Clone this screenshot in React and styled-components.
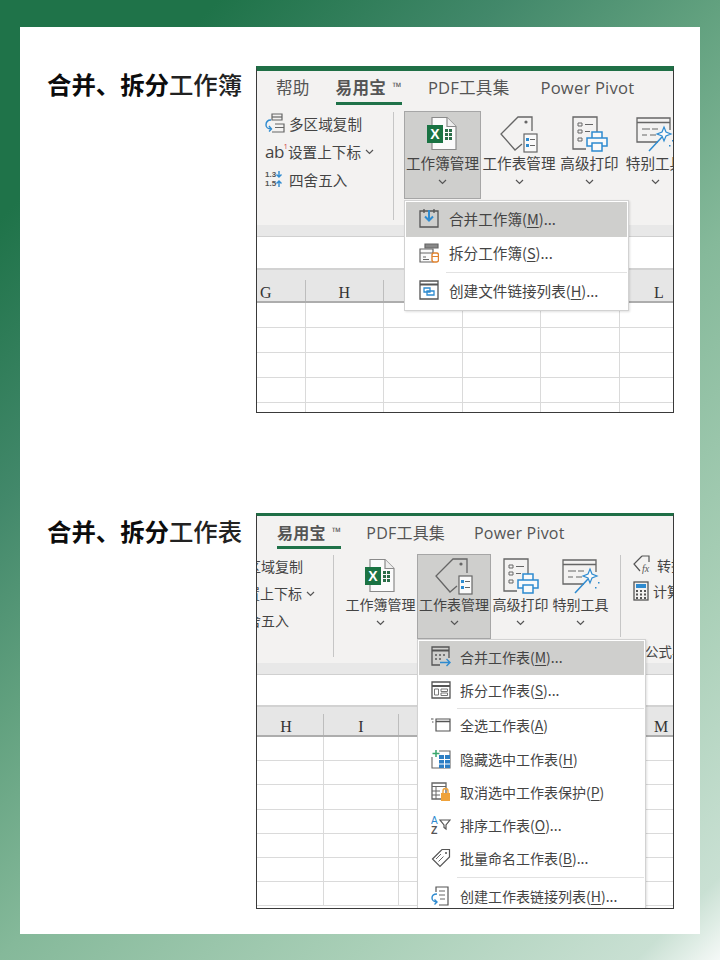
import React from 'react'
import styled, { createGlobalStyle } from 'styled-components'

const GlobalStyle = createGlobalStyle`
  html, body {
    margin: 0;
    padding: 0;
  }
  body {
    font-family: "Noto Sans CJK SC", "Liberation Sans", sans-serif;
  }
`

const Page = styled.div`
  box-sizing: border-box;
  width: 720px;
  height: 960px;
  padding: 27px 20px 26px;
  background: linear-gradient(135deg, #1f7349 0%, #1f7349 13%, #42886a 30%, #62a17f 43%, #85b99a 57%, #a9cfb7 78%, #c9e0d3 95%, #f5f9f7 100%);
`

const Card = styled.div`
  height: 907px;
  padding: 39px 26px 0 26px;
  box-sizing: border-box;
  background: #fff;
`

const Section = styled.section`
  display: flex;
  align-items: flex-start;
  margin-bottom: ${p => p.$gap}px;
`

const Title = styled.h2`
  width: 210px;
  flex: none;
  margin: 0;
  padding-left: 1px;
  box-sizing: border-box;
  font-size: 24.4px;
  line-height: 36px;
  font-weight: 700;
  color: #0c0c0c;
  white-space: nowrap;
  span {
    font-weight: 500;
    color: #222;
  }
`

const Window = styled.div`
  position: relative;
  box-sizing: border-box;
  width: 418px;
  height: ${p => p.$h}px;
  overflow: hidden;
  border: 1px solid #3a3a3a;
  border-top: ${p => p.$stripe}px solid #1f6f46;
  background: #fff;
  color: #444;
  font-size: ${p => p.$fs}px;
`

const Tabs = styled.div`
  display: flex;
  height: ${p => p.$h}px;
  padding-left: ${p => p.$pad}px;
  background: #f3f2f1;
`

const Tab = styled.div`
  box-sizing: border-box;
  margin-right: ${p => p.$mr}px;
  height: 100%;
  padding-top: ${p => p.$pt}px;
  font-size: ${p => p.$fs}px;
  letter-spacing: 0.2px;
  line-height: 24px;
  white-space: nowrap;
  font-family: "Open Sans", "Noto Sans CJK SC", sans-serif;
  color: #555;
  font-weight: ${p => (p.$active ? 700 : 400)};
  border-bottom: ${p => (p.$active ? '3px solid #1f7249' : 'none')};
  sup {
    margin-left: 2px;
    font-size: 12px;
    font-weight: 400;
    vertical-align: 3px;
    line-height: 0;
  }
`

const Ribbon = styled.div`
  display: flex;
  height: ${p => p.$h}px;
  padding-top: ${p => p.$pt}px;
  box-sizing: border-box;
  background: #f3f2f1;
`

const SmallGroup = styled.div`
  flex: none;
  display: flex;
  flex-direction: column;
  box-sizing: border-box;
  width: ${p => p.$w}px;
  margin-left: ${p => p.$ml}px;
  padding-top: ${p => p.$pt}px;
  gap: ${p => p.$gap}px;
`

const SmallButton = styled.div`
  display: flex;
  align-items: center;
  gap: 4px;
  height: 20px;
  white-space: nowrap;
  svg {
    flex: none;
  }
`

const Ab = styled.span`
  width: 19px;
  font-family: "Open Sans", sans-serif;
  font-size: 17px;
  letter-spacing: -0.5px;
  sup {
    color: #c33;
    font-size: 7px;
    line-height: 0;
    vertical-align: 9px;
  }
`

const Divider = styled.div`
  flex: none;
  width: 1px;
  height: ${p => p.$h}px;
  margin: 1px ${p => p.$mr}px 0 ${p => p.$ml || 0}px;
  background: #c6c6c6;
`

const BigButton = styled.div`
  flex: none;
  box-sizing: border-box;
  display: flex;
  flex-direction: column;
  align-items: center;
  width: ${p => p.$w}px;
  height: ${p => p.$h}px;
  padding-top: 3px;
  border: 1px solid ${p => (p.$on ? '#a6a6a6' : 'transparent')};
  background: ${p => (p.$on ? '#cfcfcd' : 'transparent')};
  white-space: nowrap;
`

const BigIcon = styled.div`
  height: ${p => p.$h}px;
  display: flex;
  align-items: center;
  justify-content: center;
`

const BigLabel = styled.div`
  line-height: 20px;
`

const Chevron = styled.svg`
  margin-top: ${p => p.$mt}px;
`

const GroupHint = styled.div`
  position: absolute;
  right: 0;
  top: ${p => p.$top}px;
  width: 28px;
  overflow: hidden;
  white-space: nowrap;
  font-size: 13.5px;
  line-height: 18px;
`

const Strip = styled.div`
  box-sizing: border-box;
  height: 12px;
  background: #e8e8e8;
  border-bottom: 1px solid #d0d0d0;
`

const FormulaBar = styled.div`
  height: ${p => p.$h}px;
  background: #fff;
`

const HeaderRow = styled.div`
  box-sizing: border-box;
  display: flex;
  align-items: flex-end;
  height: ${p => p.$h}px;
  margin-left: ${p => p.$ml}px;
  width: 700px;
  background: #e6e6e6;
  border-top: 2px solid #d2d2d2;
  border-bottom: 2px solid #adadad;
`

const ColHead = styled.div`
  flex: none;
  box-sizing: border-box;
  width: ${p => p.$w}px;
  height: 21px;
  line-height: 26px;
  text-align: center;
  font-family: "Liberation Serif", serif;
  font-size: 16px;
  color: #333;
  border-right: 1px solid #bdbdbd;
`

const GridRow = styled.div`
  box-sizing: border-box;
  display: flex;
  width: 700px;
  height: ${p => p.$h}px;
  margin-left: ${p => p.$ml}px;
  border-bottom: 1px solid #dadada;
`

const Cell = styled.div`
  flex: none;
  box-sizing: border-box;
  width: ${p => p.$w}px;
  border-right: 1px solid #dadada;
`

const Menu = styled.div`
  position: absolute;
  box-sizing: border-box;
  left: ${p => p.$left}px;
  top: ${p => p.$top}px;
  width: ${p => p.$w}px;
  padding: 1px;
  background: #fff;
  border: 1px solid #d2d2d2;
  box-shadow: 1px 1px 2px rgba(0, 0, 0, 0.12);
`

const MenuItem = styled.div`
  box-sizing: border-box;
  display: flex;
  align-items: center;
  height: ${p => p.$h}px;
  padding: 0 0 3px ${p => p.$pad}px;
  background: ${p => (p.$on ? '#cfcfcd' : 'transparent')};
  white-space: nowrap;
  svg {
    flex: none;
  }
  u {
    text-underline-offset: 2px;
  }
`

const MenuLabel = styled.span`
  margin-left: ${p => p.$ml}px;
`

const MenuLine = styled.div`
  height: 1px;
  margin: ${p => p.$y}px 0 ${p => p.$y}px ${p => p.$ml}px;
  background: #e2e2e2;
`

const ChevronDown = ({ mt = 6 }) => (
  <Chevron $mt={mt} width="9" height="6" viewBox="0 0 9 6" fill="none" stroke="#555" strokeWidth="1.2">
    <path d="M1 1l3.5 3.5L8 1" />
  </Chevron>
)

const ExcelIcon = () => (
  <svg width="32" height="36" viewBox="0 0 32 36">
    <path d="M5 1.5h15l9 9v23h-24z" fill="#fbfbfb" stroke="#8a8a8a" strokeWidth="1.2" />
    <path d="M20 1.5v9h9" fill="#eee" stroke="#8a8a8a" strokeWidth="1.2" />
    <rect x="0" y="9" width="16" height="18" fill="#1a7343" />
    <text x="8" y="23" textAnchor="middle" fontSize="14" fontWeight="700" fontFamily="Liberation Sans" fill="#fff">X</text>
    <path d="M18 13h3v3h-3zM22 13h3v3h-3zM18 17h3v3h-3zM22 17h3v3h-3zM18 21h3v3h-3zM22 21h3v3h-3z" fill="#2c6e49" />
  </svg>
)

const TagIcon = () => (
  <svg width="38" height="38" viewBox="0 0 38 38" fill="none">
    <path d="M22 29l-7 6L1 19 18 2h14v14" stroke="#666" strokeWidth="1.3" />
    <circle cx="26" cy="7" r="1.6" fill="#666" />
    <rect x="24" y="19" width="13" height="18" fill="#fafafa" stroke="#666" strokeWidth="1.2" />
    <path d="M26 23h3v3h-3zM26 29h3v3h-3z" fill="#2e8bd0" />
    <path d="M30 24.5h5M30 30.5h5" stroke="#666" strokeWidth="1.2" />
  </svg>
)

const PrintIcon = () => (
  <svg width="36" height="36" viewBox="0 0 36 36" fill="none">
    <path d="M14 33H1V1h24v15" stroke="#666" strokeWidth="1.3" />
    <path d="M6 7h4v3H6zM6 14h4v3H6zM6 22h4v3H6z" stroke="#666" />
    <path d="M13 8.5h8M13 15.5h5" stroke="#666" strokeWidth="1.2" />
    <path d="M20 22v-6h10v6M20 30h-5v-8h20v8h-5M20 27h10v8H20z" stroke="#2e8bd0" strokeWidth="1.5" fill="#fafafa" />
  </svg>
)

const WandIcon = () => (
  <svg width="38" height="36" viewBox="0 0 38 36" fill="none">
    <path d="M22 26H1V2h33v12" stroke="#666" strokeWidth="1.3" />
    <path d="M1 6.500h33" stroke="#666" strokeWidth="1.6" />
    <path d="M6 13h8M6 19h5M16 13h6M14 19h6" stroke="#666" strokeWidth="1.2" />
    <path d="M13 35l13-14" stroke="#2e8bd0" strokeWidth="1.5" />
    <path d="M28 11l2 5 5 2-5 2-2 5-2-5-5-2 5-2z" stroke="#2e8bd0" strokeWidth="1.2" fill="#fafafa" />
    <path d="M36 24h1.500v1.500H36zM33 29h1.500v1.500H33z" fill="#2e8bd0" />
  </svg>
)

const CopyAreaIcon = () => (
  <svg width="20" height="20" viewBox="0 0 20 20" fill="none">
    <path d="M7 1h10v6H7z" stroke="#666" strokeWidth="1.2" />
    <path d="M7 4h10" stroke="#666" strokeWidth="1.200" />
    <path d="M10 11h9v8H7" stroke="#666" strokeWidth="1.2" />
    <path d="M10 14.500h9" stroke="#666" />
    <path d="M6 7C2 7 1 10 1 12s2 4 5 4M4 13l2.500 3L4 18.500" stroke="#2e8bd0" strokeWidth="1.4" />
  </svg>
)

const RoundIcon = () => (
  <svg width="20" height="20" viewBox="0 0 20 20" fill="none">
    <path d="M14 2v6M11.500 5.500L14 8l2.500-2.500" stroke="#2e8bd0" strokeWidth="1.4" />
    <path d="M14 18v-6M11.500 14.500L14 12l2.500 2.500" stroke="#2e8bd0" strokeWidth="1.4" />
    <text x="0" y="8" fontSize="8" fontWeight="700" fontFamily="Liberation Sans" fill="#555">1.3</text>
    <text x="0" y="17" fontSize="8" fontWeight="700" fontFamily="Liberation Sans" fill="#555">1.5</text>
  </svg>
)

const FormulaTagIcon = () => (
  <svg width="20" height="20" viewBox="0 0 20 20" fill="none">
    <path d="M9 1h7v6M9 1L1 9l6 7" stroke="#555" strokeWidth="1.200" />
    <text x="9" y="17" fontSize="10" fontStyle="italic" fontFamily="Liberation Serif" fill="#555">fx</text>
  </svg>
)

const CalcIcon = () => (
  <svg width="16" height="20" viewBox="0 0 16 20" fill="none">
    <rect x="1" y="1" width="14" height="18" stroke="#555" strokeWidth="1.3" />
    <rect x="3" y="3" width="10" height="4" fill="#2e8bd0" />
    <path d="M3 9h2v2H3zM7 9h2v2H7zM11 9h2v2h-2zM3 12.500h2v2H3zM7 12.500h2v2H7zM11 12.500h2v2h-2zM3 16h2v2H3zM7 16h2v2H7zM11 16h2v2h-2z" fill="#555" />
  </svg>
)

const MergeBookIcon = () => (
  <svg width="20" height="20" viewBox="0 0 20 20" fill="none">
    <path d="M1 3h18v16H1z" stroke="#555" strokeWidth="1.300" />
    <path d="M5 1v4M15 1v4" stroke="#555" strokeWidth="1.300" />
    <path d="M10 2v10M6 8.500l4 4 4-4" stroke="#2e8bd0" strokeWidth="2" />
  </svg>
)

const SplitBookIcon = () => (
  <svg width="20" height="20" viewBox="0 0 20 20" fill="none">
    <path d="M6 1h13v4H6z" stroke="#666" strokeWidth="1.200" fill="#888" />
    <path d="M3 6h11v13H1V6h2" stroke="#666" strokeWidth="1.200" fill="#fafafa" />
    <path d="M1 10h13M4 14h3M4 16.500h6" stroke="#666" />
    <rect x="13" y="10" width="6.500" height="9" rx="2" fill="#fff" stroke="#e0822e" strokeWidth="1.400" />
    <path d="M13 13.500h6.500" stroke="#e0822e" />
  </svg>
)

const LinkListIcon = () => (
  <svg width="20" height="20" viewBox="0 0 20 20" fill="none">
    <path d="M1 1h18v18H1z" stroke="#555" strokeWidth="1.300" />
    <path d="M1 4.500h18" stroke="#555" strokeWidth="2" />
    <path d="M5 8h6v4H5zM8 11h7v4H8z" stroke="#2e8bd0" strokeWidth="1.300" />
  </svg>
)

const MergeSheetIcon = () => (
  <svg width="20" height="21" viewBox="0 0 20 21" fill="none">
    <path d="M9 19H1V1h17v11" stroke="#555" strokeWidth="1.300" />
    <path d="M1 4.500h17" stroke="#555" strokeWidth="2" />
    <path d="M4 8h2v2H4zM8 8h2v2H8zM12 8h2v2h-2zM4 12h2v2H4zM8 12h2v2H8z" fill="#777" />
    <path d="M9 16.500h10M15.500 13l3.500 3.500-3.500 3.500" stroke="#2e8bd0" strokeWidth="1.400" />
  </svg>
)

const SplitSheetIcon = () => (
  <svg width="20" height="18" viewBox="0 0 20 18" fill="none">
    <path d="M1 1h18v16H1z" stroke="#555" strokeWidth="1.300" />
    <path d="M1 5h18" stroke="#555" strokeWidth="2" />
    <path d="M3.500 8h4v6h-4zM10 8h6.500v2.500H10zM10 12h6.500v2.500H10z" stroke="#777" />
  </svg>
)

const SelectAllIcon = () => (
  <svg width="20" height="16" viewBox="0 0 20 16" fill="none">
    <path d="M5 2h14v12H5z" stroke="#555" strokeWidth="1.200" />
    <path d="M5 4.500h14" stroke="#555" strokeWidth="1.500" />
    <path d="M0 2h2.500M1 5h1.500" stroke="#555" strokeWidth="1.200" />
  </svg>
)

const HideSheetIcon = () => (
  <svg width="20" height="20" viewBox="0 0 20 20" fill="none">
    <path d="M1 8v11h18V2H8" stroke="#666" strokeWidth="1.100" />
    <rect x="8" y="6" width="11" height="13" fill="#2e7fc4" />
    <path d="M8 10.500h11M8 15h11M13.500 6v13" stroke="#fff" />
    <path d="M5 1v7M1.500 4.500h7" stroke="#3aa76d" strokeWidth="1.500" />
  </svg>
)

const UnprotectIcon = () => (
  <svg width="20" height="20" viewBox="0 0 20 20" fill="none">
    <path d="M1 1h14v16H1z" stroke="#666" strokeWidth="1.300" />
    <path d="M1 4.500h14M5 4.500V17M1 9h8M1 13h8" stroke="#666" />
    <rect x="10" y="11" width="9" height="8" fill="#efa23a" />
    <path d="M12 11V9a2.500 2.500 0 015 0v2" stroke="#efa23a" strokeWidth="1.400" />
  </svg>
)

const SortIcon = () => (
  <svg width="20" height="20" viewBox="0 0 20 20" fill="none">
    <text x="0" y="8.500" fontSize="10" fontFamily="Liberation Sans" fill="#2e8bd0">A</text>
    <text x="0" y="19" fontSize="10.500" fontWeight="700" fontFamily="Liberation Sans" fill="#555">Z</text>
    <path d="M9 5h10l-4 5v4l-2-1.500V10z" stroke="#555" strokeWidth="1.200" />
  </svg>
)

const RenameIcon = () => (
  <svg width="20" height="20" viewBox="0 0 20 20" fill="none">
    <path d="M1.500 11L11 1.500h7.500V9L9 18.500z" stroke="#555" strokeWidth="1.200" />
    <path d="M5 11l5-5M7.500 13.500l5-5" stroke="#666" />
    <circle cx="15" cy="5" r="1" fill="#555" />
  </svg>
)

const LinkSheetIcon = () => (
  <svg width="20" height="20" viewBox="0 0 20 20" fill="none">
    <path d="M5 6V1h12v18H8" stroke="#555" strokeWidth="1.200" />
    <path d="M8 5h6M8 9h6M9 13h5" stroke="#666" />
    <path d="M6 8C2 8 1 10 1 12s2 4 5 4M3.500 13.500L6 16l-2.500 2.500" stroke="#2e8bd0" strokeWidth="1.400" />
  </svg>
)

const Big = ({ w, h, on, iconH, icon, label }) => (
  <BigButton $w={w} $h={h} $on={on}>
    <BigIcon $h={iconH}>{icon}</BigIcon>
    <BigLabel>{label}</BigLabel>
    <ChevronDown />
  </BigButton>
)

const Sheet = ({ cols, letters, ml, rows, rowH, headH }) => (
  <>
    <HeaderRow $h={headH} $ml={ml}>
      {letters.map(l => <ColHead key={l} $w={cols}>{l}</ColHead>)}
    </HeaderRow>
    {Array.from({ length: rows }, (_, r) => (
      <GridRow key={r} $h={rowH} $ml={ml}>
        {letters.map(l => <Cell key={l} $w={cols} />)}
      </GridRow>
    ))}
  </>
)

const App = () => (
  <>
    <GlobalStyle />
    <Page>
      <Card>
        <Section $gap={100}>
          <Title>合并、拆分<span>工作簿</span></Title>
          <Window $h={347} $stripe={5} $fs={14.6}>
            <Tabs $h={34} $pad={19}>
              <Tab $fs={16.6} $mr={26} $pt={5}>帮助</Tab>
              <Tab $fs={16.6} $mr={26} $pt={5} $active>易用宝 <sup>™</sup></Tab>
              <Tab $fs={16.6} $mr={31} $pt={5}>PDF工具集</Tab>
              <Tab $fs={16.6} $pt={5}>Power Pivot</Tab>
            </Tabs>
            <Ribbon $h={120} $pt={6}>
              <SmallGroup $w={128} $ml={8} $pt={2} $gap={8}>
                <SmallButton><CopyAreaIcon />多区域复制</SmallButton>
                <SmallButton><Ab>ab<sup>1</sup></Ab>设置上下标<ChevronDown mt={1} /></SmallButton>
                <SmallButton><RoundIcon />四舍五入</SmallButton>
              </SmallGroup>
              <Divider $h={108} $mr={10} />
              <Big w={77} h={88} on iconH={38} icon={<ExcelIcon />} label="工作簿管理" />
              <Big w={76} h={88} iconH={38} icon={<TagIcon />} label="工作表管理" />
              <Big w={65} h={88} iconH={38} icon={<PrintIcon />} label="高级打印" />
              <Big w={66} h={88} iconH={38} icon={<WandIcon />} label="特别工具" />
            </Ribbon>
            <Strip />
            <FormulaBar $h={31} />
            <Sheet cols={78.6} letters={['G', 'H', 'I', 'J', 'K', 'L']} ml={-30} rows={5} rowH={25} headH={35} />
            <Menu $left={147} $top={129} $w={225}>
              <MenuItem $h={35} $pad={13} $on><MergeBookIcon /><MenuLabel $ml={10}>合并工作簿(<u>M</u>)...</MenuLabel></MenuItem>
              <MenuItem $h={34} $pad={13}><SplitBookIcon /><MenuLabel $ml={10}>拆分工作簿(<u>S</u>)...</MenuLabel></MenuItem>
              <MenuLine $y={1} $ml={40} />
              <MenuItem $h={35} $pad={13}><LinkListIcon /><MenuLabel $ml={10}>创建文件链接列表(<u>H</u>)...</MenuLabel></MenuItem>
            </Menu>
          </Window>
        </Section>
        <Section $gap={0}>
          <Title>合并、拆分<span>工作表</span></Title>
          <Window $h={396} $stripe={3} $fs={14}>
            <Tabs $h={33} $pad={20}>
              <Tab $fs={16} $mr={25} $pt={5} $active>易用宝 <sup>™</sup></Tab>
              <Tab $fs={16} $mr={29} $pt={5}>PDF工具集</Tab>
              <Tab $fs={16} $pt={5}>Power Pivot</Tab>
            </Tabs>
            <Ribbon $h={114} $pt={5}>
              <SmallGroup $w={124} $ml={-48} $pt={2} $gap={7}>
                <SmallButton><CopyAreaIcon />多区域复制</SmallButton>
                <SmallButton><Ab>ab<sup>1</sup></Ab>设置上下标<ChevronDown mt={1} /></SmallButton>
                <SmallButton><RoundIcon />四舍五入</SmallButton>
              </SmallGroup>
              <Divider $h={102} $mr={10} />
              <Big w={73} h={85} iconH={36} icon={<ExcelIcon />} label="工作簿管理" />
              <Big w={74} h={85} on iconH={36} icon={<TagIcon />} label="工作表管理" />
              <Big w={59} h={85} iconH={36} icon={<PrintIcon />} label="高级打印" />
              <Big w={61} h={85} iconH={36} icon={<WandIcon />} label="特别工具" />
              <Divider $h={82} $ml={9} $mr={12} />
              <SmallGroup $w={60} $ml={0} $pt={1} $gap={6}>
                <SmallButton><FormulaTagIcon />转换</SmallButton>
                <SmallButton><CalcIcon />计算</SmallButton>
              </SmallGroup>
            </Ribbon>
            <GroupHint $top={126}>公式与</GroupHint>
            <Strip />
            <FormulaBar $h={30} />
            <Sheet cols={75} letters={['H', 'I', 'J', 'K', 'L', 'M']} ml={-8} rows={7} rowH={24.2} headH={32} />
            <Menu $left={160} $top={123} $w={229}>
              <MenuItem $h={34} $pad={12} $on><MergeSheetIcon /><MenuLabel $ml={9}>合并工作表(<u>M</u>)...</MenuLabel></MenuItem>
              <MenuItem $h={33} $pad={12}><SplitSheetIcon /><MenuLabel $ml={9}>拆分工作表(<u>S</u>)...</MenuLabel></MenuItem>
              <MenuLine $y={0} $ml={38} />
              <MenuItem $h={35} $pad={12}><SelectAllIcon /><MenuLabel $ml={9}>全选工作表(<u>A</u>)</MenuLabel></MenuItem>
              <MenuItem $h={33} $pad={12}><HideSheetIcon /><MenuLabel $ml={9}>隐藏选中工作表(<u>H</u>)</MenuLabel></MenuItem>
              <MenuItem $h={33} $pad={12}><UnprotectIcon /><MenuLabel $ml={9}>取消选中工作表保护(<u>P</u>)</MenuLabel></MenuItem>
              <MenuItem $h={33} $pad={12}><SortIcon /><MenuLabel $ml={9}>排序工作表(<u>O</u>)...</MenuLabel></MenuItem>
              <MenuItem $h={33} $pad={12}><RenameIcon /><MenuLabel $ml={9}>批量命名工作表(<u>B</u>)...</MenuLabel></MenuItem>
              <MenuLine $y={1} $ml={38} />
              <MenuItem $h={36} $pad={12}><LinkSheetIcon /><MenuLabel $ml={9}>创建工作表链接列表(<u>H</u>)...</MenuLabel></MenuItem>
            </Menu>
          </Window>
        </Section>
      </Card>
    </Page>
  </>
)

export default App
